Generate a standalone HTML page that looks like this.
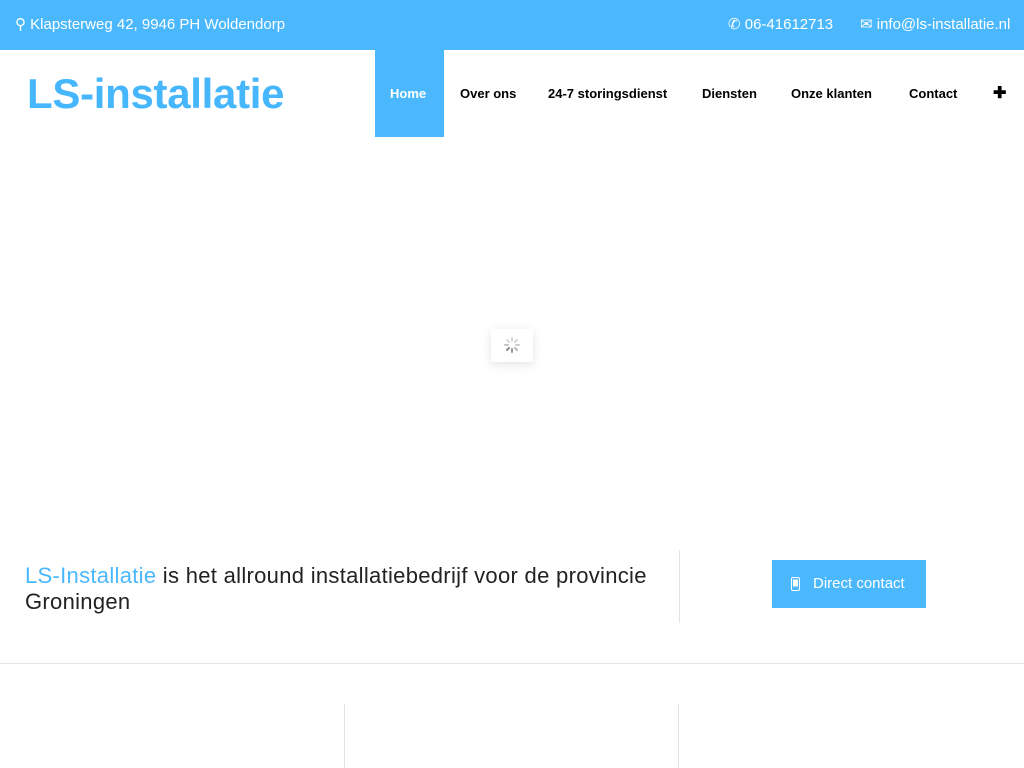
<!DOCTYPE html>
<html><head><meta charset="utf-8"><style>
*{margin:0;padding:0;box-sizing:border-box}
body{width:1024px;height:768px;overflow:hidden;background:#fff;font-family:"Liberation Sans",sans-serif;position:relative}
.top{position:absolute;left:0;top:0;width:1024px;height:50px;background:#4bb8fe;color:#fff;font-size:15px}
.top span{position:absolute;top:15px}
.logo{position:absolute;left:27px;top:70px;font-size:42px;font-weight:bold;color:#46b6fd;letter-spacing:-0.3px}
.nav a{position:absolute;top:86px;font-size:13px;font-weight:bold;color:#000;text-decoration:none}
.home{position:absolute;left:375px;top:50px;width:69px;height:87px;background:#4bb8fe}
.loader{position:absolute;left:491px;top:329px;width:42px;height:33px;background:#fff;box-shadow:0 2px 10px rgba(0,0,0,.12)}
.tag{position:absolute;left:25px;top:563px;font-size:22px;color:#222;line-height:26px;width:650px;letter-spacing:0.3px}
.vl{position:absolute;width:1px;background:#e2e2e2}
.btn{position:absolute;left:772px;top:560px;width:154px;height:48px;background:#4bb8fe;color:#fff;font-size:15px;line-height:48px;padding-left:41px}
.hr{position:absolute;left:0;top:663px;width:1024px;height:1px;background:#e5e5e5}
</style></head><body>
<div class="top"><span style="left:15px">⚲ Klapsterweg 42, 9946 PH Woldendorp</span><span style="left:728px">✆ 06-41612713</span><span style="left:860px">✉ info@ls-installatie.nl</span></div>
<div class="logo">LS-installatie</div>
<div class="home"></div>
<div class="nav">
<a style="left:390px;color:#fff">Home</a>
<a style="left:460px">Over ons</a>
<a style="left:548px">24-7 storingsdienst</a>
<a style="left:702px">Diensten</a>
<a style="left:791px">Onze klanten</a>
<a style="left:909px">Contact</a>
<a style="left:993px;font-size:16px;top:83px">✚</a>
</div>
<div class="loader"><svg width="42" height="33" viewBox="0 0 42 33"><g stroke="#888" stroke-width="2" stroke-linecap="round">
<line x1="21" y1="9" x2="21" y2="12" opacity=".3"/><line x1="26" y1="11" x2="24" y2="13" opacity=".35"/><line x1="28" y1="16" x2="25" y2="16" opacity=".4"/><line x1="26" y1="21" x2="24" y2="19" opacity=".6"/><line x1="21" y1="23" x2="21" y2="20" opacity=".9"/><line x1="16" y1="21" x2="18" y2="19" opacity="1"/><line x1="14" y1="16" x2="17" y2="16" opacity=".5"/><line x1="16" y1="11" x2="18" y2="13" opacity=".3"/></g></svg></div>
<div class="tag"><span style="color:#4bb8fe">LS-Installatie</span> is het allround installatiebedrijf voor de provincie Groningen</div>
<div class="vl" style="left:679px;top:550px;height:73px"></div>
<div class="btn"><svg style="position:absolute;left:19px;top:17px" width="9" height="14" viewBox="0 0 9 14"><rect x="0.5" y="0.5" width="8" height="13" rx="1.5" fill="none" stroke="#fff"/><rect x="2" y="2.5" width="5" height="7" fill="#fff"/></svg>Direct contact</div>
<div class="hr"></div>
<div class="vl" style="left:344px;top:704px;height:64px"></div>
<div class="vl" style="left:678px;top:704px;height:64px"></div>
</body></html>
